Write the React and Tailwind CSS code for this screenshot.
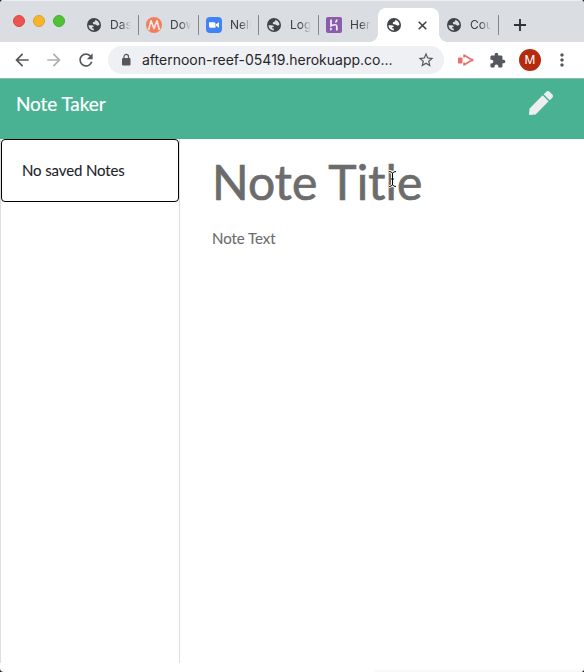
import React from 'react';
import { MdArrowBack, MdArrowForward, MdRefresh, MdStarBorder, MdMoreVert, MdAdd } from 'react-icons/md';
import { FaPen } from 'react-icons/fa';

function Globe({ land = '#dadde1' }) {
  return (
    <svg viewBox="0 0 14 14" className="size-[14px] shrink-0">
      <circle cx="7" cy="7" r="7" fill="#3f4246" />
      <path d="M1.500 7.200h3.300c1.300 0 2 .7 2 1.900H5.300v1.300h1.500v2C4 12.300 1.500 10.200 1.500 7.200z" fill={land} />
      <path d="M8.200 1.700c2.400.5 4.100 2.500 4.300 4.800-.4.9-1.300 1.300-2.200 1.100-.8-.2-1-.900-1.700-1.100-1-.2-2.600.2-2.800-1-.2-1.100.6-1.500 1.400-1.700.8-.3 1.300-.8 1-2.100z" fill={land} />
    </svg>
  );
}

function Mail() {
  return (
    <svg viewBox="0 0 16 16" className="-mx-px size-4 shrink-0">
      <circle cx="8" cy="8" r="8" fill="#ee805f" />
      <path d="M2.600 13 5 3.800 8 11.500 11 3.800 13.400 13" fill="none" stroke="#f5e5e0" strokeWidth="1.700" strokeLinejoin="round" />
    </svg>
  );
}

function Zoom() {
  return (
    <svg viewBox="0 0 16 16" className="-mx-px size-4 shrink-0">
      <rect width="16" height="16" rx="4" fill="#3f83f6" />
      <path d="M3 5.200h5q1.500 0 1.500 1.500v4h-5Q3 10.700 3 9.200zM10 7.200l3-2v5.500l-3-2z" fill="#fff" />
    </svg>
  );
}

function Heroku() {
  return (
    <svg viewBox="0 0 16 16" className="-mx-px size-4 shrink-0">
      <rect width="16" height="16" rx="2" fill="#8a5cab" />
      <path d="M5 2.500v6.200q5.800-2.200 5.800.6v4.200M10.800 2.500q0 1.700-1.400 3" fill="none" stroke="#f5eefa" strokeWidth="1.700" />
      <path d="M4.200 10.300v3.600l2.100-1.800z" fill="#f5eefa" />
    </svg>
  );
}

function Tab({ icon, label, divider = true }) {
  return (
    <div className="flex h-[34px] w-[60px] shrink-0 items-center pl-2">
      {icon}
      <span className="ml-[9px] w-[21px] overflow-hidden whitespace-nowrap font-['Inter','Roboto',sans-serif] text-[12px] leading-4 text-[#3c3f43] [mask-image:linear-gradient(to_right,black_50%,transparent)]">{label}</span>
      {divider && <span className="ml-[7px] h-5 w-px shrink-0 bg-[#85888c]" />}
    </div>
  );
}

export default function App() {
  return (
    <div className="relative flex h-[672px] w-[584px] flex-col overflow-hidden bg-[#222] font-['Lato',sans-serif]">
      <div className="flex min-h-0 flex-1 flex-col overflow-hidden rounded-[4px] bg-white">
        <div className="flex h-[42px] shrink-0 border-t border-[#eceef0] bg-[#dadde1] pt-[7px]">
          <div className="flex w-[79px] shrink-0 gap-2 pl-[13px] pt-[7px]">
            <span className="size-3 rounded-full border border-[#d94640] bg-[#ee544f]" />
            <span className="size-3 rounded-full border border-[#dca02d] bg-[#f6b52b]" />
            <span className="size-3 rounded-full border border-[#41ad31] bg-[#51c136]" />
          </div>
          <Tab icon={<Globe />} label="Das" />
          <Tab icon={<Mail />} label="Dow" />
          <Tab icon={<Zoom />} label="Neli" />
          <Tab icon={<Globe />} label="Log" />
          <Tab icon={<Heroku />} label="Her" divider={false} />
          <div className="relative -ml-px flex h-[34px] w-[61px] shrink-0 items-center rounded-t-lg bg-white pl-[9px]">
            <span className="absolute -left-2 bottom-0 size-2 bg-[radial-gradient(circle_at_0_0,transparent_7.5px,white_8px)]" />
            <Globe land="#ffffff" />
            <svg viewBox="0 0 13 13" className="ml-[15px] size-[13px]">
              <path d="m2.700 2.700 7.600 7.600M10.300 2.700l-7.600 7.600" stroke="#393c40" strokeWidth="1.500" />
            </svg>
            <span className="absolute -right-2 bottom-0 size-2 bg-[radial-gradient(circle_at_100%_0,transparent_7.5px,white_8px)]" />
          </div>
          <Tab icon={<Globe />} label="Cou" />
          <svg viewBox="0 0 18 18" className="ml-[12px] mt-[8px] size-[18px]">
            <path d="M9 3v12M3 9h12" stroke="#303236" strokeWidth="1.900" />
          </svg>
        </div>
        <div className="flex h-[36px] shrink-0 items-center bg-white text-[#54575b]">
          <MdArrowBack className="ml-3 size-5" />
          <MdArrowForward className="ml-3 size-5 text-[#adafb2]" />
          <MdRefresh className="ml-[12px] size-5" />
          <div className="ml-[12px] flex h-7 w-[336px] items-center rounded-full bg-[#eff0f3] pl-[11px]">
            <svg viewBox="0 0 14 14" className="size-[14px]">
              <rect x="3" y="5" width="8.500" height="7.500" rx="1" fill="#54575b" />
              <path d="M5 5.500V3.700a2.250 2.250 0 0 1 4.500 0v1.800" fill="none" stroke="#54575b" strokeWidth="1.200" />
            </svg>
            <span className="ml-[9px] w-[260px] whitespace-nowrap font-['Inter','Roboto',sans-serif] text-[14px] leading-5 text-[#25272a]">afternoon-reef-05419.herokuapp.co...</span>
            <MdStarBorder className="ml-[15px] size-[18px]" />
          </div>
          <svg viewBox="0 0 18 14" className="ml-[13px] h-[14px] w-[18px]">
            <rect x="1" y="4.500" width="4.500" height="6" rx=".7" fill="#e9716b" />
            <path d="M7 4.500V2L15 7l-8 5V9.500" fill="none" stroke="#e9716b" strokeWidth="1.600" strokeLinejoin="round" />
            <circle cx="15" cy="7" r="1.600" fill="#e9716b" />
          </svg>
          <svg viewBox="0 0 24 24" fill="currentColor" className="ml-[14px] size-[17px]">
            <path d="M20.500 11H19V7c0-1.100-.9-2-2-2h-4V3.500C13 2.120 11.880 1 10.500 1S8 2.120 8 3.500V5H4c-1.100 0-2 .9-2 2v3.800h1.500c1.490 0 2.700 1.210 2.700 2.700s-1.210 2.700-2.700 2.700H2V20c0 1.100.9 2 2 2h3.800v-1.500c0-1.490 1.210-2.700 2.700-2.700s2.700 1.210 2.700 2.700V22H17c1.100 0 2-.9 2-2v-4h1.500c1.380 0 2.500-1.120 2.500-2.500S21.880 11 20.500 11z" />
          </svg>
          <span className="ml-[13px] flex size-[22px] items-center justify-center rounded-full bg-[#b52b0d] font-['Inter',sans-serif] text-[12px] text-white">M</span>
          <MdMoreVert className="ml-[11px] size-5" />
        </div>
        <header className="flex h-[61px] shrink-0 justify-between border-t border-[#91b9aa] bg-[#48b293] pl-4 pr-[31px]">
          <h1 className="pt-3 text-[19px] leading-[26px] tracking-[-0.1px] text-white [-webkit-text-stroke:0.2px]">Note Taker</h1>
          <FaPen className="mt-[12px] size-6 text-[#ecefee]" />
        </header>
        <main className="flex h-[524px] shrink-0">
          <aside className="w-[180px] border-x border-[#dedede]">
            <div className="flex h-[63px] items-center rounded-[4px] border border-black pl-5 text-[15px] tracking-[-0.12px] text-[#212529] [-webkit-text-stroke:0.1px]">No saved Notes</div>
          </aside>
          <section className="pl-8 pt-[14px] text-[#6c6c6c]">
            <div className="relative text-[48px] leading-[58px] tracking-[0.08px] [-webkit-text-stroke:0.7px]">
              Note Title
              <svg viewBox="0 0 9 18" className="absolute left-[176px] top-[17px] h-[18px] w-[9px]">
                <path d="M1 1.500q3 0 3.500 2 .500-2 3.500-2M4.500 3v12M1 16.500q3 0 3.500-2 .500 2 3.500 2M3 9h3" fill="none" stroke="white" strokeWidth="2.800" />
                <path d="M1 1.500q3 0 3.500 2 .500-2 3.500-2M4.500 3v12M1 16.500q3 0 3.500-2 .500 2 3.500 2M3 9h3" fill="none" stroke="black" />
              </svg>
            </div>
            <div className="mt-[15px] text-[15px] leading-6 tracking-[-0.05px] [-webkit-text-stroke:0.1px]">Note Text</div>
          </section>
        </main>
        <footer className="mt-auto flex justify-end">
          <div className="h-[3px] w-[210px] bg-gradient-to-b from-white to-[#f6f6f6]" />
        </footer>
      </div>
    </div>
  );
}
